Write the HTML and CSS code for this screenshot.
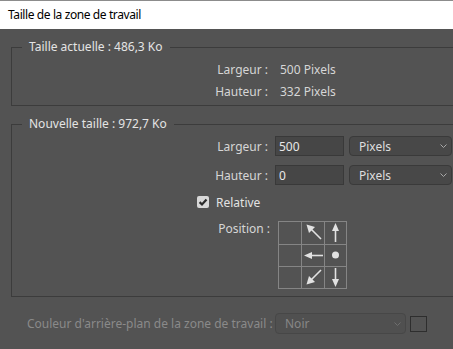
FILE: index.html
```html
<!DOCTYPE html>
<html lang="fr">
<head>
    <meta charset="UTF-8">
    <meta name="viewport" content="width=device-width, initial-scale=1.0">
    <title>Taille de la zone de travail</title>
    <link rel="stylesheet" href="styles.css">
</head>
<body>

    <div class="titlebar">Taille de la zone de travail</div>

    <!-- Current size -->
    <fieldset class="group group-current">
        <legend>Taille actuelle : 486,3 Ko</legend>
        <div class="info-row"><span class="label">Largeur :</span><span class="value">500 Pixels</span></div>
        <div class="info-row"><span class="label">Hauteur :</span><span class="value">332 Pixels</span></div>
    </fieldset>

    <!-- New size -->
    <fieldset class="group group-new">
        <legend>Nouvelle taille : 972,7 Ko</legend>

        <div class="field-row">
            <label class="label" for="width">Largeur :</label>
            <input class="num-input" type="text" id="width" value="500">
            <div class="dropdown">
                <span>Pixels</span>
                <svg class="chevron" width="7" height="4" viewBox="0 0 7 4"><path d="M0.5 0.5 L3.5 3.5 L6.5 0.5" fill="none" stroke="#a8a8a8" stroke-width="1"/></svg>
            </div>
        </div>

        <div class="field-row">
            <label class="label" for="height">Hauteur :</label>
            <input class="num-input" type="text" id="height" value="0">
            <div class="dropdown">
                <span>Pixels</span>
                <svg class="chevron" width="7" height="4" viewBox="0 0 7 4"><path d="M0.5 0.5 L3.5 3.5 L6.5 0.5" fill="none" stroke="#a8a8a8" stroke-width="1"/></svg>
            </div>
        </div>

        <div class="check-row">
            <span class="checkbox">
                <svg width="12" height="12" viewBox="0 0 12 12"><path d="M2.6 6.1 L5 8.5 L9.5 3.5" fill="none" stroke="#2a2a2a" stroke-width="2.2"/></svg>
            </span>
            <span>Relative</span>
        </div>

        <div class="anchor-row">
            <span class="label">Position :</span>
            <div class="anchor-grid">
                <div class="cell"></div>
                <div class="cell">
                    <svg width="22" height="22" viewBox="0 0 22 22"><line x1="9" y1="7" x2="19" y2="17" stroke="#e2e2e2" stroke-width="1.6"/><polygon points="4.5,2.5 7,11 13,5" fill="#e2e2e2"/></svg>
                </div>
                <div class="cell">
                    <svg width="21" height="22" viewBox="0 0 21 22"><line x1="10.5" y1="8" x2="10.5" y2="20" stroke="#e2e2e2" stroke-width="1.6"/><polygon points="10.5,1 7,9 14,9" fill="#e2e2e2"/></svg>
                </div>
                <div class="cell"></div>
                <div class="cell">
                    <svg width="22" height="21" viewBox="0 0 22 21"><line x1="9" y1="10.5" x2="21" y2="10.5" stroke="#e2e2e2" stroke-width="1.6"/><polygon points="2,10.5 10,7 10,14" fill="#e2e2e2"/></svg>
                </div>
                <div class="cell">
                    <svg width="21" height="21" viewBox="0 0 21 21"><circle cx="10.5" cy="10" r="3.5" fill="#e2e2e2"/></svg>
                </div>
                <div class="cell"></div>
                <div class="cell">
                    <svg width="22" height="21" viewBox="0 0 22 21"><line x1="9" y1="13" x2="19" y2="3" stroke="#e2e2e2" stroke-width="1.6"/><polygon points="4.5,17.5 7,9 13,15" fill="#e2e2e2"/></svg>
                </div>
                <div class="cell">
                    <svg width="21" height="21" viewBox="0 0 21 21"><line x1="10.5" y1="1" x2="10.5" y2="12" stroke="#e2e2e2" stroke-width="1.6"/><polygon points="10.5,20 7,12 14,12" fill="#e2e2e2"/></svg>
                </div>
            </div>
        </div>
    </fieldset>

    <!-- Canvas background colour (disabled) -->
    <div class="bg-row">
        <span class="bg-label">Couleur d'arrière-plan de la zone de travail :</span>
        <div class="dropdown dropdown-disabled">
            <span>Noir</span>
            <svg class="chevron" width="7" height="4" viewBox="0 0 7 4"><path d="M0.5 0.5 L3.5 3.5 L6.5 0.5" fill="none" stroke="#6e6e6e" stroke-width="1"/></svg>
        </div>
        <span class="swatch"></span>
    </div>

</body>
</html>
```

FILE: styles.css
```css
body {
    margin: 0;
    background-color: #535353;
    font-family: "Noto Sans", "Open Sans", sans-serif;
    font-size: 12px;
    color: #d6d6d6;
}
.titlebar {
    box-sizing: border-box;
    height: 29px;
    line-height: 28px;
    padding-left: 8px;
    background-color: #ffffff;
    border-top: 1px solid #8c8c8c;
    color: #000000;
    letter-spacing: -0.4px; /* title font is narrower */
}
.group {
    margin: 10px 0 0 11px;
    padding: 0;
    min-width: 0;
    border: 1px solid #3c3c3c;
    border-right: none;
}
.group legend {
    margin-left: 10px;
    padding: 0 7px;
    line-height: 16px;
    color: #e4e4e4;
}
.label {
    width: 256px;
    flex-shrink: 0;
    text-align: right;
}
.group-current {
    padding: 3px 0 3px 0;
}
.info-row {
    display: flex;
    height: 22px;
    align-items: center;
}
.info-row .value {
    margin-left: 12px;
}
.group-new {
    padding: 4px 0 7px 0;
}
.field-row {
    display: flex;
    align-items: center;
    height: 20px;
    margin-bottom: 9px;
}
.num-input {
    box-sizing: border-box;
    width: 69px;
    height: 20px;
    margin: 0 0 0 7px;
    padding: 0 3px;
    background-color: #464646;
    border: 1px solid #393939;
    color: #e8e8e8;
    font-family: inherit;
    font-size: 12px;
    outline: none;
}
.dropdown {
    box-sizing: border-box;
    display: flex;
    align-items: center;
    justify-content: space-between;
    width: 103px;
    height: 20px;
    margin-left: 5px;
    padding: 0 4px 0 9px;
    background-color: #484848;
    border: 1px solid #3a3a3a;
    border-radius: 4px;
    color: #dedede;
}
.check-row {
    display: flex;
    align-items: center;
    height: 12px;
    margin: 11px 0 0 185px;
    gap: 7px;
    color: #e2e2e2;
}
.checkbox {
    display: block;
    width: 12px;
    height: 12px;
    background-color: #d8d8d8;
    border-radius: 2px;
}
.checkbox svg {
    display: block;
}
.anchor-row {
    display: flex;
    align-items: flex-start;
    margin-top: 13px;
}
.anchor-row .label {
    line-height: 15px;
    width: 258px;
}
.anchor-grid {
    display: grid;
    grid-template-columns: 22px 22px 21px;
    grid-template-rows: 22px 21px 21px;
    gap: 1px;
    padding: 1px;
    margin-left: 8px;
    background-color: #858585;
}
.cell {
    background-color: #535353;
}
.cell svg {
    display: block;
}
.bg-row {
    display: flex;
    align-items: center;
    margin-top: 16px;
    padding-left: 27px;
    color: #8a8a8a;
}
.bg-label {
    width: 242px;
    flex-shrink: 0;
    white-space: nowrap;
}
.dropdown-disabled {
    width: 131px;
    height: 21px;
    margin-left: 6px;
    background-color: #505050;
    border-color: #474747;
    color: #878787;
}
.swatch {
    box-sizing: border-box;
    width: 17px;
    height: 16px;
    margin-left: 4px;
    border: 1px solid #2e2e2e;
}
```
